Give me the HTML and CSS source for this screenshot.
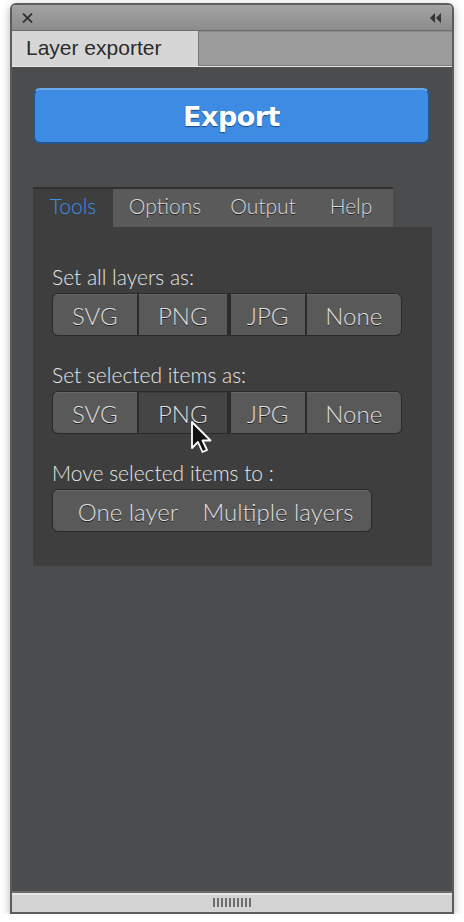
FILE: index.html
```html
<!DOCTYPE html>
<html>
<head>
    <title>Layer exporter</title>
    <link rel="stylesheet" href="styles.css">
</head>
<body>
    <div class="window">
        <div class="titlebar">
            <svg class="close" width="11" height="10" viewBox="0 0 11 10">
                <path d="M1 0.5 L10 9.5 M10 0.5 L1 9.5" stroke="#333" stroke-width="1.8"/>
            </svg>
            <svg class="collapse" width="12" height="10" viewBox="0 0 12 10">
                <polygon points="5,0 5,10 0,5" fill="#333"/>
                <polygon points="11,0 11,10 6,5" fill="#333"/>
            </svg>
        </div>
        <div class="paneltabs">
            <div class="paneltab">Layer exporter</div>
            <div class="paneltab-rest"></div>
        </div>
        <div class="content">
            <button class="export">Export</button>

            <div class="tabs">
                <div class="tab active">Tools</div>
                <div class="tab">Options</div>
                <div class="tab">Output</div>
                <div class="tab">Help</div>
            </div>
            <div class="tabbody">
                <div class="label">Set all layers as:</div>
                <div class="group">
                    <button class="w1">SVG</button>
                    <button class="w2">PNG</button>
                    <button class="w3 split">JPG</button>
                    <button class="w4">None</button>
                </div>

                <div class="label">Set selected items as:</div>
                <div class="group">
                    <button class="w1">SVG</button>
                    <button class="w2 pressed">PNG</button>
                    <button class="w3 split">JPG</button>
                    <button class="w4">None</button>
                </div>

                <div class="label">Move selected items to :</div>
                <div class="group move">
                    <button class="one">One layer</button>
                    <button class="multi">Multiple layers</button>
                </div>

                <!-- mouse pointer over PNG -->
                <svg class="cursor" width="26" height="36" viewBox="0 0 26 36">
                    <path d="M2 2 L2 28 L8 22 L12.5 32 L17 30 L12.5 20.5 L20.5 20.5 Z" fill="#111" stroke="#fff" stroke-width="1.8" stroke-linejoin="round"/>
                </svg>
            </div>
        </div>
        <div class="statusbar">
            <div class="grip"></div>
        </div>
    </div>
</body>
</html>
```

FILE: styles.css
```css
body {
    margin: 0;
    background: #fff;
    font-family: Lato, "Open Sans", sans-serif;
}
.window {
    margin: 3px 0 0 10px;
    width: 440px;
    height: 907px;
    border: 2px solid #5c5c5c;
    border-radius: 6px 6px 0 0;
    box-shadow: 0 3px 10px rgba(0,0,0,0.3);
    display: flex;
    flex-direction: column;
    overflow: hidden;
}
.titlebar {
    height: 25px;
    background: linear-gradient(#a3a3a3, #8c8c8c);
    border-bottom: 1px solid #6c6c6c;
    display: flex;
    justify-content: space-between;
    align-items: center;
    padding: 0 10px 0 10px;
}
.paneltabs {
    display: flex;
    height: 35px;
    background: #e8e8e8;
    padding-bottom: 1px;
}
.paneltab {
    width: 186px;
    background: #d6d6d6;
    color: #2b2b2b;
    font-family: "Liberation Sans", sans-serif;
    font-size: 21px;
    padding: 5px 0 0 14px;
    box-sizing: border-box;
}
.paneltab-rest {
    flex: 1;
    background: #9b9b9b;
    border-left: 1px solid #777;
    border-top: 1px solid #8a8a8a;
    border-bottom: 1px solid #7a7a7a;
}
.content {
    flex: 1;
    background: #4b4c4e;
    padding: 21px 20px 0 21px;
}
.export {
    display: block;
    width: 397px;
    height: 56px;
    background: #3d8be3;
    border: 2px solid #23568f;
    border-top-color: #6aa6ea;
    border-radius: 7px;
    color: #fff;
    font-family: "DejaVu Sans", sans-serif;
    font-weight: bold;
    font-size: 27px;
    letter-spacing: -0.5px;
    text-shadow: 0 1px 1px #1c4a80;
}
.tabs {
    display: flex;
    margin-top: 43px;
    width: 360px;
    height: 40px;
    border-top: 2px solid #303030;
    box-sizing: border-box;
}
.tab {
    background: #5a5a5a;
    color: #dcdcdc;
    font-size: 21px;
    font-weight: 300;
    padding: 4px 0 0 0;
    text-align: center;
    text-shadow: 0 1px 0 #222;
}
.tab:nth-child(1) { width: 80px; }
.tab:nth-child(2) { width: 104px; }
.tab:nth-child(3) { width: 92px; }
.tab:nth-child(4) { width: 84px; }
.tab.active {
    background: #3e3e3e;
    color: #3b8fe6;
    text-shadow: none;
}
.tabbody {
    position: relative;
    background: #3e3e3e;
    width: 399px;
    height: 339px;
    padding: 37px 0 0 19px;
    box-sizing: border-box;
}
.label {
    color: #e6e6e6;
    font-size: 21px;
    font-weight: 300;
    line-height: 26px;
    margin-bottom: 3px;
}
.group {
    display: flex;
    width: 350px;
    height: 43px;
    margin-bottom: 26px;
    background: #2c2c2c;
    border: 1px solid #2a2a2a;
    border-radius: 6px;
    box-sizing: border-box;
    overflow: hidden;
    gap: 2px;
}
.group button {
    background: #595959;
    border: none;
    border-top: 1px solid #666;
    color: #e0e0e0;
    font-family: Lato, "Open Sans", sans-serif;
    font-size: 24px;
    font-weight: 300;
    text-shadow: 0 1px 0 #222;
    padding: 0;
}
.group .w1 { width: 84px; }
.group .w2 { width: 89px; }
.group .w3 { width: 74px; }
.group .w4 { width: 95px; }
.group .split { margin-left: 2px; }
.group button.pressed {
    background: #454545;
    border-top-color: #3a3a3a;
}
.group.move {
    width: 320px;
    gap: 0;
}
.move .one { width: 140px; padding-left: 10px; }
.move .multi { flex: 1; padding-right: 8px; }
.cursor {
    position: absolute;
    left: 157px;
    top: 193px;
}
.statusbar {
    height: 19px;
    background: #d4d4d4;
    border-top: 2px solid #6a6a6a;
    box-shadow: inset 0 2px 0 #e6e6e6;
    display: flex;
    justify-content: center;
    align-items: center;
}
.grip {
    width: 38px;
    height: 9px;
    background: repeating-linear-gradient(90deg, #6e6e6e 0 2px, transparent 2px 4px);
}
```
